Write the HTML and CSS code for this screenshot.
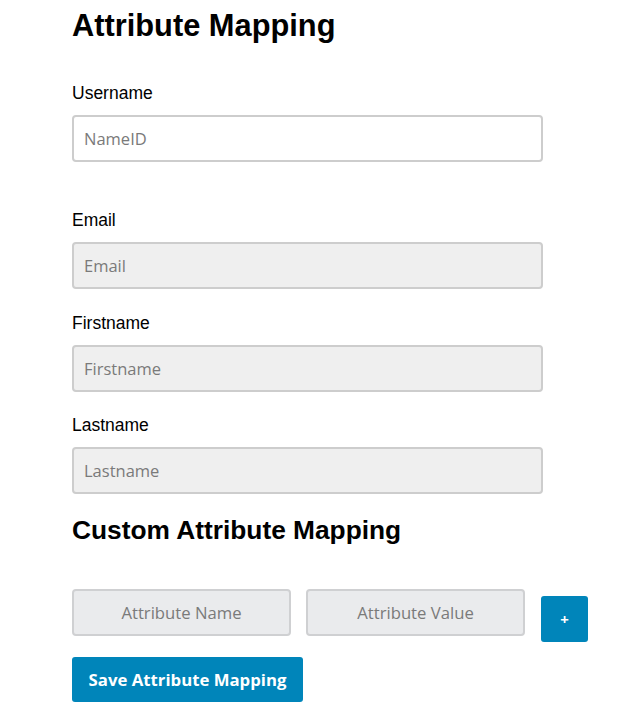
FILE: index.html
```html
<!DOCTYPE html>
<html>
<head>
  <meta charset="utf-8">
  <title>Attribute Mapping</title>
  <link rel="stylesheet" href="styles.css">
</head>
<body>
  <div class="page">
    <h1>Attribute Mapping</h1>

    <div class="fields">
      <div class="field field-first">
        <label for="username">Username</label>
        <input id="username" type="text" placeholder="NameID">
      </div>

      <div class="field">
        <label for="email">Email</label>
        <input id="email" class="locked" type="text" placeholder="Email" disabled>
      </div>

      <div class="field">
        <label for="firstname">Firstname</label>
        <input id="firstname" class="locked" type="text" placeholder="Firstname" disabled>
      </div>

      <div class="field">
        <label for="lastname">Lastname</label>
        <input id="lastname" class="locked" type="text" placeholder="Lastname" disabled>
      </div>
    </div>

    <h2>Custom Attribute Mapping</h2>

    <div class="custom-row">
      <input class="custom" type="text" placeholder="Attribute Name" disabled>
      <input class="custom" type="text" placeholder="Attribute Value" disabled>
      <button class="btn btn-add" type="button">+</button>
    </div>

    <button class="btn btn-save" type="button">Save Attribute Mapping</button>
  </div>
</body>
</html>
```

FILE: styles.css
```css
body {
  margin: 0;
  padding: 0;
  background: #fff;
  font-family: "Liberation Sans", Arial, sans-serif;
  color: #000;
}

.page {
  padding: 8px 0 20px 72px;
}

h1 {
  margin: 0 0 39px 0;
  font-size: 30.8px;
  line-height: 36px;
  font-weight: bold;
}

h2 {
  margin: 20.5px 0 44px 0;
  font-size: 26.3px;
  line-height: 30px;
  font-weight: bold;
}

.fields {
  display: flex;
  flex-direction: column;
  gap: 23.5px;
}

.field {
  display: flex;
  flex-direction: column;
}

.field-first {
  margin-bottom: 24.5px;
}

.field label {
  font-size: 17.5px;
  line-height: 20px;
  margin-bottom: 12px;
}

.field input {
  box-sizing: border-box;
  width: 471px;
  height: 47px;
  margin: 0;
  padding: 0 10px;
  border: 2px solid #cdcdcd;
  border-radius: 4px;
  background: #fff;
  font-family: "Open Sans", sans-serif;
  font-size: 16.5px;
  color: #333;
}

.field input.locked {
  background: #efefef;
}

input::placeholder {
  color: #7a7a7a;
  opacity: 1;
}

.custom-row {
  display: flex;
  align-items: flex-start;
  gap: 15px;
}

.custom {
  box-sizing: border-box;
  width: 219px;
  height: 47px;
  margin: 0;
  padding: 0 8px;
  border: 2px solid #cfd0d2;
  border-radius: 4px;
  background: #eaebed;
  font-family: "Open Sans", sans-serif;
  font-size: 16.7px;
  text-align: center;
}

.btn {
  border: none;
  border-radius: 3px;
  background: #0085ba;
  color: #fff;
  font-family: "Open Sans", sans-serif;
  font-weight: bold;
  cursor: pointer;
}

.btn-add {
  width: 47px;
  height: 46px;
  margin-top: 7px;
  margin-left: 1px;
  padding: 0;
  font-size: 15px;
}

.btn-save {
  display: block;
  margin-top: 15px;
  width: 231px;
  height: 45px;
  padding: 0;
  font-size: 16.75px;
}
```
